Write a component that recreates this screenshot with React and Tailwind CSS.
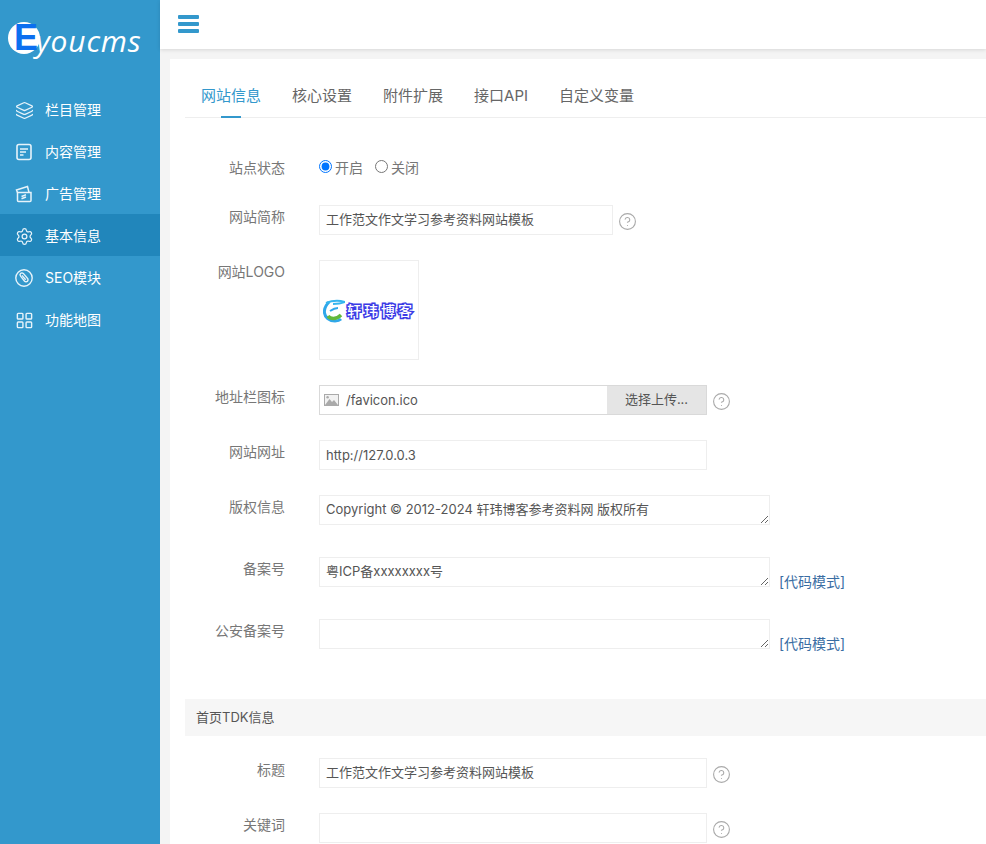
import React from 'react';
import { Layers, Settings, LayoutGrid, CircleHelp } from 'lucide-react';

const font = 'font-["Inter","Noto_Sans_CJK_SC",sans-serif]';

const DocIcon = () => (
  <svg width="18" height="18" viewBox="0 0 18 18" fill="none" stroke="currentColor" strokeWidth="1.6">
    <rect x="2" y="1.5" width="14" height="15" rx="2" />
    <path d="M5 6h8M5 9h6M5 12h3.5" />
  </svg>
);

const AdIcon = () => (
  <svg width="18" height="18" viewBox="0 0 18 18" fill="none" stroke="currentColor" strokeWidth="1.5">
    <path d="M2.500 7.500V15.500a1 1 0 0 0 1 1h11.500a1 1 0 0 0 1-1V7.500z" />
    <path d="M2.500 7.500 1.500 5 12.500 1.500 14 7.500" />
    <path d="M6.500 11.500 11 9.800M6.500 13.700 11 12" />
  </svg>
);

const SeoIcon = () => (
  <svg width="18" height="18" viewBox="0 0 18 18" fill="none" stroke="currentColor" strokeWidth="1.4">
    <circle cx="9" cy="9" r="8.200" />
    <path d="M5.600 7.100a1.900 1.900 0 0 1 2.700-2.700l4.100 4.900a2 2 0 0 1-2.800 2.900z" />
    <path d="M7 6.400l3.700 4.300" />
  </svg>
);

const PicIcon = () => (
  <svg width="15" height="12" viewBox="0 0 15 12" className="text-[#aaa]">
    <rect x="0.5" y="0.5" width="14" height="11" fill="#f2f2f2" stroke="currentColor" />
    <path d="M1 11 5.500 5l2.500 3 2-2 4 5z" fill="currentColor" />
    <circle cx="3.600" cy="3.200" r="1.200" fill="currentColor" />
  </svg>
);

const Help = () => <CircleHelp size={19} strokeWidth={1.4} className="text-[#aaa] shrink-0" />;

const menu = [
  { name: '栏目管理', icon: <Layers size={19} strokeWidth={1.6} /> },
  { name: '内容管理', icon: <DocIcon /> },
  { name: '广告管理', icon: <AdIcon /> },
  { name: '基本信息', icon: <Settings size={19} strokeWidth={1.6} />, active: true },
  { name: 'SEO模块', icon: <SeoIcon /> },
  { name: '功能地图', icon: <LayoutGrid size={19} strokeWidth={1.8} /> },
];

const tabs = ['网站信息', '核心设置', '附件扩展', '接口API', '自定义变量'];

const Row = ({ label, className = '', children }) => (
  <div className={`flex items-start ${className}`}>
    <label className="w-[100px] shrink-0 mr-[34px] text-right text-sm leading-6 text-[#777]">{label}</label>
    {children}
  </div>
);

const inputClass = 'h-[30px] px-[6px] border border-[#eeeeee] bg-white text-[13px] text-[#555] outline-none';
const areaClass = 'block w-[451px] h-[30px] px-[6px] py-[3px] border border-[#eeeeee] text-[13px] leading-[20px] text-[#555] outline-none';

const CodeMode = () => (
  <a className="ml-[9px] text-sm leading-5 text-[#3a6da3] self-end -mb-[5px]">[代码模式]</a>
);

const App = () => {
  return (
    <div className={`flex h-[844px] overflow-hidden bg-[#f4f4f4] ${font}`}>
      <aside className="w-40 shrink-0 bg-[#3398cc] text-white">
        <div className="relative h-[88px]">
          <div className="absolute left-2 top-[22px] w-8 h-8 rounded-full bg-white" />
          <span className='absolute left-[14px] top-[15px] font-["Liberation_Sans",sans-serif] font-bold text-[36px] leading-[46px] text-[#0b6ff0]'>E</span>
          <span className='absolute left-[36px] top-[21px] font-["Open_Sans",sans-serif] italic font-medium text-[30px] leading-[40px] tracking-[0.8px] text-white'>youcms</span>
        </div>
        <ul>
          {menu.map((item) => (
            <li
              key={item.name}
              className={`flex items-center h-[42px] pl-[15px] pt-[2px] text-sm ${item.active ? 'bg-[#2186bb]' : ''}`}
            >
              <span className="w-[30px] text-[#e6f3fa]">{item.icon}</span>
              {item.name}
            </li>
          ))}
        </ul>
      </aside>

      <div className="flex-1 min-w-0">
        <header className="h-[49px] bg-white flex items-center pl-[18px] shadow-[0_1px_4px_rgba(0,0,0,0.12)]">
          <div className="w-[21px] flex flex-col gap-[3.5px] -mt-[1px]">
            <span className="h-[3.5px] bg-[#3398cc] rounded-[1px]" />
            <span className="h-[3.5px] bg-[#3398cc] rounded-[1px]" />
            <span className="h-[3.5px] bg-[#3398cc] rounded-[1px]" />
          </div>
        </header>

        <main className="mt-[10px] ml-[10px] h-[785px] bg-white pl-[15px] overflow-hidden">
          <div className="flex h-[59px] pt-[25px] pl-4 gap-[31px] border-b border-[#eeeeee] text-[15px] leading-6 text-[#666]">
            {tabs.map((tab, i) => (
              <div key={tab} className={`relative h-[34px] ${i === 0 ? 'text-[#3398cc]' : ''}`}>
                {tab}
                {i === 0 && <span className="absolute left-5 bottom-0 w-5 h-[2px] bg-[#3398cc]" />}
              </div>
            ))}
          </div>

          <div className="flex items-center h-[30px] mt-[35px]">
            <label className="w-[100px] mr-[34px] text-right text-sm text-[#777]">站点状态</label>
            <label className="flex items-center text-sm text-[#777]">
              <input type="radio" name="status" defaultChecked className="w-[13px] h-[13px] m-0 mr-[3px] -mt-1" />
              开启
            </label>
            <label className="flex items-center ml-3 text-sm text-[#777]">
              <input type="radio" name="status" className="w-[13px] h-[13px] m-0 mr-[3px] -mt-1" />
              关闭
            </label>
          </div>

          <Row label="网站简称" className="mt-[22px]">
            <input readOnly value="工作范文作文学习参考资料网站模板" className={`${inputClass} w-[294px] pb-[3px]`} />
            <span className="ml-[5px] mt-[7px]"><Help /></span>
          </Row>

          <Row label="网站LOGO" className="mt-[25px]">
            <div className="w-[100px] h-[100px] border border-[#eeeeee] flex items-center pl-[3px] pt-[1px]">
              <svg width="22" height="24" viewBox="0 0 22 24" className="shrink-0" fill="none">
                <path d="M6 3C3 6 1 10 1.500 14 2 18 6 22 12 22c3 0 5-1 6-2" stroke="#2fa7ea" strokeWidth="3" />
                <path d="M5 17c2 3 8 4 13-1" stroke="#63b83c" strokeWidth="3.500" />
                <path d="M3 4c5-2 12-3 19-1-5 2-9 2-12 2" stroke="#35b5ee" strokeWidth="2" />
                <path d="M7 12c3-2 6-3 8-3" stroke="#2fa7ea" strokeWidth="2" />
              </svg>
              <span className="ml-[2px] text-sm leading-6 font-medium tracking-[3px] whitespace-nowrap text-white [-webkit-text-stroke:3px_#3b3be6] [paint-order:stroke_fill]">轩玮博客</span>
            </div>
          </Row>

          <Row label="地址栏图标" className="mt-[25px]">
            <div className="flex w-[388px] h-[30px] border border-[#d9d9d9]">
              <div className="flex-1 flex items-center pl-1 text-[13px] text-[#555]">
                <PicIcon />
                <span className="ml-[7px] pt-[1px]">/favicon.ico</span>
              </div>
              <button className="w-[99px] bg-[#e5e5e5] text-[13px] text-[#555]">选择上传...</button>
            </div>
            <span className="ml-[5px] mt-[7px]"><Help /></span>
          </Row>

          <Row label="网站网址" className="mt-[25px]">
            <input readOnly value="http://127.0.0.3" className={`${inputClass} w-[388px]`} />
          </Row>

          <Row label="版权信息" className="mt-[25px]">
            <textarea readOnly value="Copyright © 2012-2024 轩玮博客参考资料网 版权所有" className={areaClass} />
          </Row>

          <Row label="备案号" className="mt-8">
            <textarea readOnly value="粤ICP备xxxxxxxx号" className={areaClass} />
            <CodeMode />
          </Row>

          <Row label="公安备案号" className="mt-8">
            <textarea readOnly value="" className={areaClass} />
            <CodeMode />
          </Row>

          <div className="mt-[50px] h-[37px] pl-[11px] flex items-center bg-[#f6f6f6] text-[13px] text-[#555]">首页TDK信息</div>

          <Row label="标题" className="mt-[22px]">
            <input readOnly value="工作范文作文学习参考资料网站模板" className={`${inputClass} w-[388px] pb-[3px]`} />
            <span className="ml-[5px] mt-[7px]"><Help /></span>
          </Row>

          <Row label="关键词" className="mt-[25px]">
            <input readOnly value="" className={`${inputClass} w-[388px]`} />
            <span className="ml-[5px] mt-[7px]"><Help /></span>
          </Row>
        </main>
      </div>
    </div>
  );
};

export default App;
